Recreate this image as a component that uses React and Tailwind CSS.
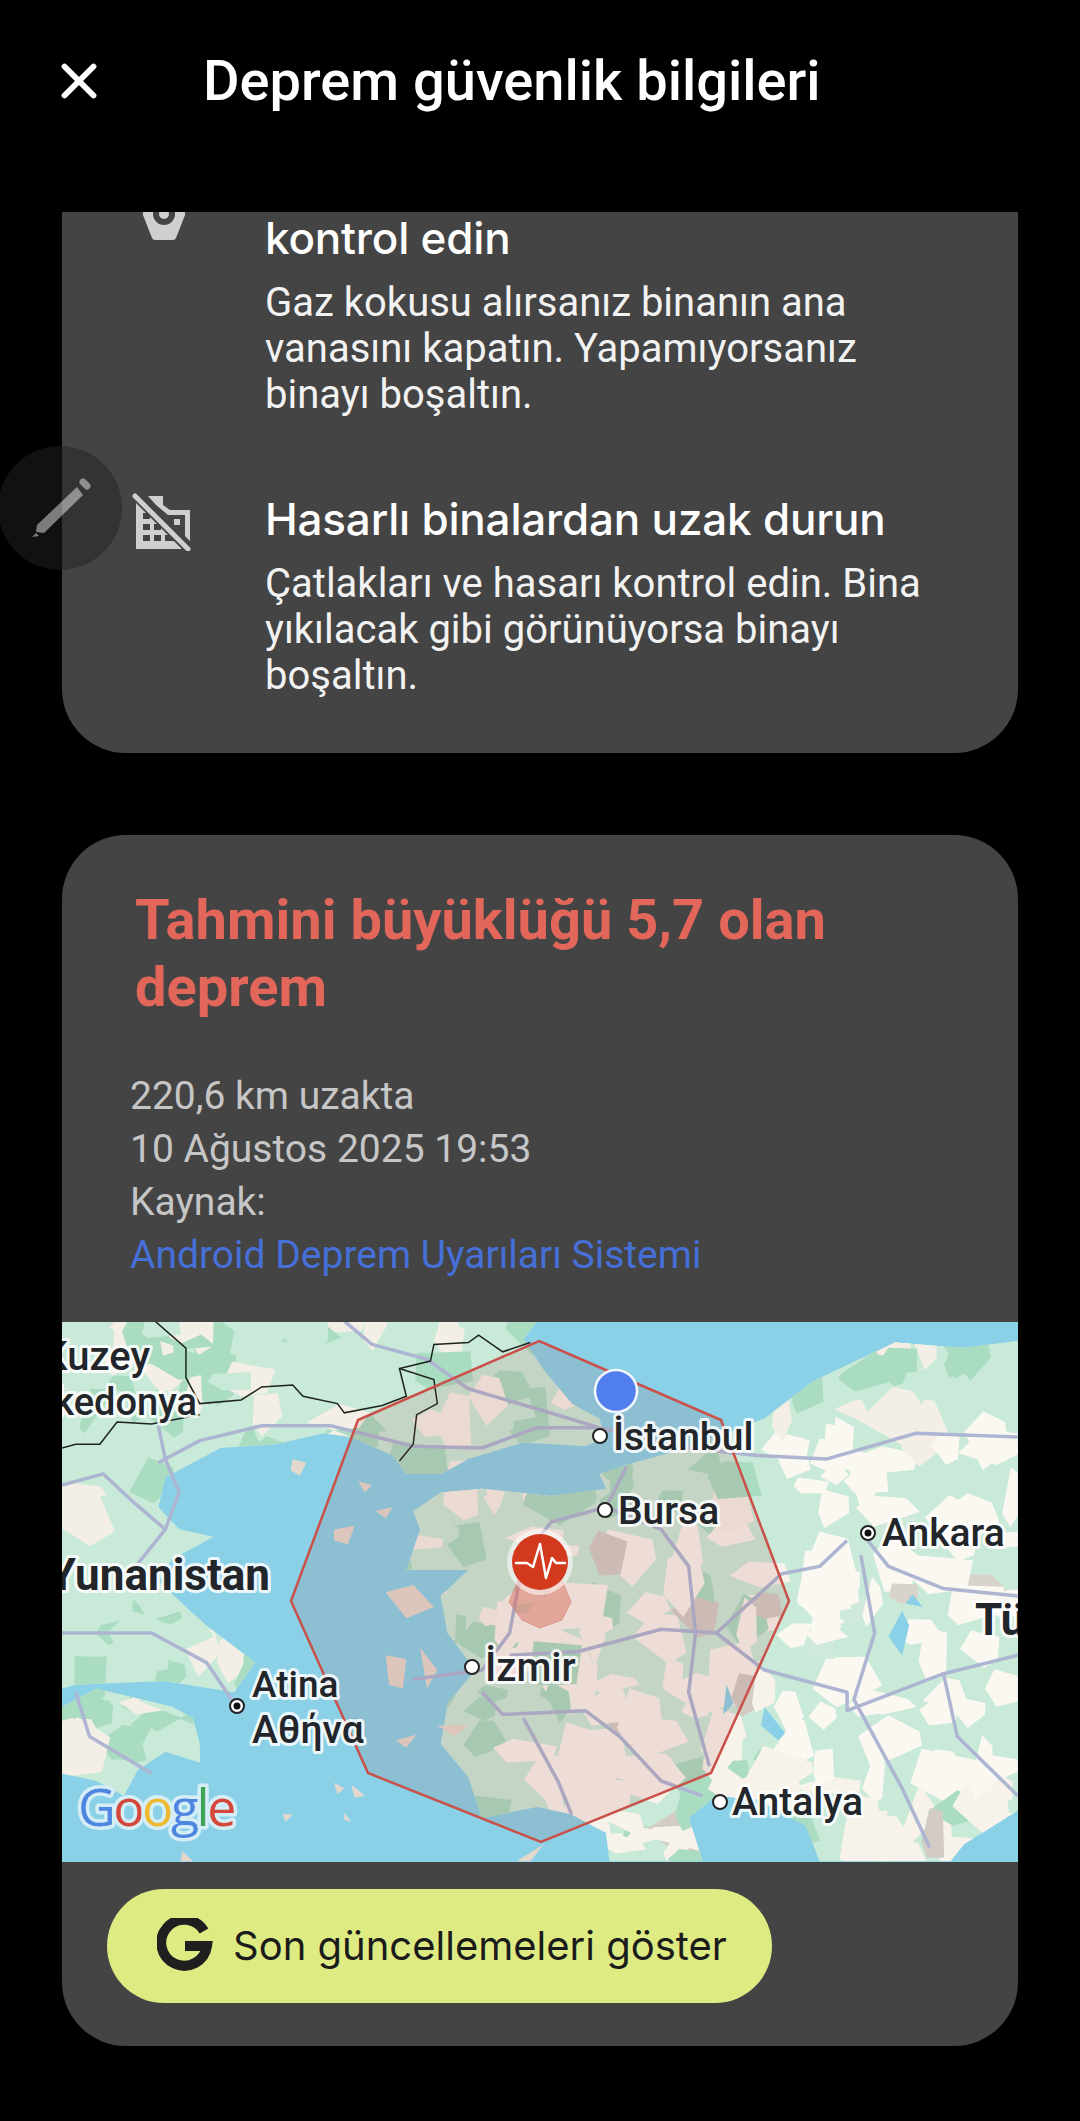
import { X } from "lucide-react";

// map paths use the coordinates of the zoomed crop, the group transform brings them to the map box
const LAND = {
  anatolia:
    "M1478 110 L1400 130 L1300 115 L1180 220 L1110 320 L1070 350 L1000 400 L920 440 L870 470 L880 510 L800 530 L700 510 L640 520 L600 570 L610 620 L590 730 L680 730 L640 800 L650 900 L690 1000 L650 1090 L640 1200 L680 1290 L700 1400 L780 1370 L830 1390 L880 1440 L885 1517 L1020 1517 L1000 1400 L1040 1340 L1100 1350 L1170 1420 L1190 1517 L1380 1517 L1400 1470 L1478 1380Z",
  balkans:
    "M90 57 L780 57 L760 105 L790 190 L830 280 L870 320 L880 370 L850 395 L760 385 L680 430 L640 470 L590 470 L570 420 L510 370 L470 360 L400 390 L320 400 L240 480 L230 560 L260 620 L310 640 L250 700 L230 760 L270 830 L300 880 L370 980 L340 1060 L240 1030 L110 1040 L90 1050Z",
  peloponnese:
    "M90 1100 L140 1050 L250 1100 L280 1130 L290 1200 L290 1250 L240 1220 L200 1270 L180 1340 L140 1300 L90 1280Z",
};

// small seeded generator, so the low-poly land texture is the same on every load
const makeRandom = (seed) => () => {
  seed = (seed * 1664525 + 1013904223) % 4294967296;
  return seed / 4294967296;
};

const buildLandPatches = () => {
  const random = makeRandom(77);
  const patches = [];
  for (let i = 0; i < 420; i++) {
    const x = 90 + random() * 1388;
    const y = 57 + random() * 1460;
    const rx = 15 + random() * 40;
    const ry = 25 + random() * 70;
    const points = [0, 1, 2, 3, 4]
      .map((n) => {
        const a = (n / 5) * Math.PI * 2 + random();
        return `${(x + Math.cos(a) * rx).toFixed(0)},${(y + Math.sin(a) * ry).toFixed(0)}`;
      })
      .join(" ");
    const interior = x > 720 && y > 620;
    const east = x > 1130 && y > 380 && y < 1300;
    const roll = random();
    let fill;
    if (east) fill = roll < 0.06 ? "#cfe9da" : roll < 0.1 ? "#d8d4cc" : "#fbf8f2";
    else if (interior) fill = roll < 0.16 ? "#a9dcc1" : roll < 0.24 ? "#d2ccc4" : "#f7f3eb";
    else fill = roll < 0.4 ? "#a9dcc1" : roll < 0.62 ? "#f4efe6" : "#c9ead9";
    patches.push({ points, fill });
  }
  return patches;
};

const landPatches = buildLandPatches();

const islands = [
  "M485 620 L515 610 L505 660 L485 650Z",
  "M545 570 L570 560 L560 590Z",
  "M520 490 L540 500 L530 520Z",
  "M425 430 L445 440 L435 475 L422 460Z",
  "M560 790 L600 770 L630 830 L590 860Z",
  "M560 960 L590 970 L585 1050 L565 1040Z",
  "M610 940 L635 1000 L620 1050Z",
  "M635 1150 L680 1150 L660 1180Z",
  "M575 1190 L605 1175 L590 1210Z",
  "M510 1310 L530 1340 L515 1345Z",
  "M485 1305 L500 1320 L490 1335Z",
  "M410 1390 L425 1390 L415 1410Z",
  "M500 1385 L510 1410 L500 1405Z",
  "M265 1490 L280 1517 L262 1517Z",
  "M790 1470 L770 1517 L750 1517Z",
];

const roads = [
  "M500 57 L540 120 L620 160 L680 240 L790 300 L870 345",
  "M870 345 L780 345 L700 400 L600 395 L480 340 L380 340 L290 380 L230 440",
  "M230 340 L240 430 L260 520 L240 620 L180 760",
  "M90 500 L150 470 L190 540 L240 620",
  "M90 900 L220 900 L300 980 L340 1090",
  "M110 1060 L130 1180 L220 1280",
  "M870 345 L1000 400 L1100 420 L1200 430 L1330 360 L1478 370",
  "M910 450 L880 560 L800 600 L760 700 L740 900 L700 1000 L600 1025",
  "M880 560 L960 620 L1000 720 L1010 900 L1000 1060 L1030 1260",
  "M1230 650 L1190 720 L1135 740 L1040 900 L960 890 L840 950 L740 960",
  "M1040 900 L1110 1000 L1230 1060 L1230 1110 L1370 1010 L1478 960",
  "M1260 650 L1290 720 L1370 780 L1478 800",
  "M1250 690 L1270 900 L1240 1080 L1310 1320 L1350 1480",
  "M700 1060 L730 1120 L850 1110 L900 1180 L960 1300 L1020 1340",
  "M760 1130 L810 1300 L830 1390",
  "M1370 1010 L1390 1180 L1478 1340",
];

const borders = [
  "M225 57 L270 130 L270 210 L290 280 L350 270 L380 235 L425 230 L440 260 L490 280 L500 305 L555 285 L590 260 L580 185 L625 165 L630 120 L680 115 L695 95 L730 140 L770 115",
  "M580 185 L630 215 L635 280 L605 310 L600 390 L580 435",
  "M290 310 L220 335 L170 330 L145 390 L110 390 L90 400",
];

const mapLabels = [
  { text: "Kuzey", x: 88, y: 48, size: 40, anchor: "end", weight: 500 },
  { text: "Makedonya", x: 135, y: 93, size: 38, anchor: "end", weight: 500 },
  { text: "Yunanistan", x: 208, y: 268, size: 44, anchor: "end", weight: 700 },
  { text: "İstanbul", x: 551, y: 128, size: 39, weight: 500 },
  { text: "Bursa", x: 556, y: 202, size: 39, weight: 500 },
  { text: "Ankara", x: 820, y: 224, size: 39, weight: 500 },
  { text: "Tü", x: 913, y: 313, size: 44, weight: 700 },
  { text: "İzmir", x: 423, y: 359, size: 40, weight: 500 },
  { text: "Atina", x: 190, y: 375, size: 37, weight: 500 },
  { text: "Αθήνα", x: 190, y: 421, size: 39, weight: 500 },
  { text: "Antalya", x: 670, y: 493, size: 39, weight: 500 },
];

const mapDots = [
  { x: 538, y: 114 },
  { x: 543, y: 188 },
  { x: 806, y: 211, capital: true },
  { x: 410, y: 345 },
  { x: 175, y: 384, capital: true },
  { x: 658, y: 480 },
];

const EarthquakeMap = () => (
  <svg viewBox="0 0 956 540" className="block h-[540px] w-full bg-[#8ad1e8]">
    <defs>
      <clipPath id="land">
        <path d={LAND.anatolia} />
        <path d={LAND.balkans} />
        <path d={LAND.peloponnese} />
      </clipPath>
    </defs>
    <g transform="translate(-62,-22) scale(0.6887,0.37)">
      <path fill="#c9ead9" d={LAND.anatolia} />
      <path fill="#c9ead9" d={LAND.balkans} />
      <path fill="#c9ead9" d={LAND.peloponnese} />
      <g clipPath="url(#land)">
        {landPatches.map((patch) => (
          <polygon key={patch.points} points={patch.points} fill={patch.fill} />
        ))}
      </g>
      {islands.map((d) => (
        <path key={d} d={d} fill="#e4d8cc" />
      ))}
      {/* lakes */}
      <path fill="#8ad1e8" d="M1310 840 L1320 880 L1310 960 L1290 910Z" />
      <path fill="#8ad1e8" d="M1110 1100 L1140 1170 L1130 1190 L1105 1150Z" />
      <path fill="#8ad1e8" d="M1055 1040 L1065 1090 L1050 1120Z" />
      <path fill="#8ad1e8" d="M1325 795 L1340 830 L1315 820Z" />
      {roads.map((d) => (
        <path key={d} d={d} fill="none" stroke="#adb5d2" strokeWidth="3.5" strokeLinejoin="round" vectorEffect="non-scaling-stroke" />
      ))}
      {borders.map((d) => (
        <path key={d} d={d} fill="none" stroke="#1d2420" strokeWidth="1.5" vectorEffect="non-scaling-stroke" />
      ))}
    </g>

    {/* estimated shaking area */}
    <polygon
      points="477,19 659,98 727,279 649,451 479,520 306,451 229,279 296,98"
      fill="#a84040"
      fillOpacity="0.12"
      stroke="#c9514a"
      strokeWidth="2.5"
    />
    <polygon
      points="478,252 500,258 509,280 500,298 478,306 460,298 447,280 456,258"
      fill="#d9705f"
      fillOpacity="0.5"
      stroke="#d9705f"
      strokeOpacity="0.5"
    />

    {mapDots.map((dot) => (
      <g key={dot.x}>
        <circle cx={dot.x} cy={dot.y} r="7" fill="#fff" stroke="#222" strokeWidth="2" />
        {dot.capital && <circle cx={dot.x} cy={dot.y} r="3.5" fill="#111" />}
      </g>
    ))}
    {mapLabels.map((label) => (
      <text
        key={label.text}
        x={label.x}
        y={label.y}
        textAnchor={label.anchor || "start"}
        fontSize={label.size}
        fontWeight={label.weight}
        fill="#22262a"
        stroke="#fff"
        strokeOpacity="0.85"
        strokeWidth="6"
        paintOrder="stroke"
        strokeLinejoin="round"
        className="font-['Roboto',sans-serif]"
      >
        {label.text}
      </text>
    ))}

    {/* google mark */}
    <text
      x="16"
      y="504"
      fontSize="52"
      fontWeight="500"
      stroke="#d5eef6"
      strokeWidth="7"
      paintOrder="stroke"
      strokeLinejoin="round"
      letterSpacing="-2.5"
      className="font-['Open_Sans',sans-serif]"
    >
      <tspan fill="#4f86e0">G</tspan>
      <tspan fill="#d4483b">o</tspan>
      <tspan fill="#eeb82f">o</tspan>
      <tspan fill="#4f86e0">g</tspan>
      <tspan fill="#3fa35a">l</tspan>
      <tspan fill="#d4483b">e</tspan>
    </text>

    {/* user location */}
    <circle cx="554" cy="69" r="21" fill="#5180ee" stroke="#f4f7fb" strokeWidth="2.5" />

    {/* epicentre */}
    <circle cx="478" cy="240" r="33" fill="#fff" fillOpacity="0.55" />
    <circle cx="478" cy="240" r="28" fill="#d33a1d" />
    <path
      d="M454 241 H465 L471 245 L478 222 L484 256 L490 236 L494 241 H503"
      fill="none"
      stroke="#fff"
      strokeWidth="2.5"
      strokeLinejoin="round"
      strokeLinecap="round"
    />
  </svg>
);

const GasValveIcon = () => (
  <svg viewBox="0 0 42 28" className="h-7 w-[42px]">
    <path fill="#cfcfcf" d="M0 0 H42 V3 L33 26 Q32 28 30 28 H12 Q10 28 9 26 L0 3Z" />
    <circle cx="21" cy="2" r="11" fill="#444" />
    <circle cx="21" cy="2" r="5" fill="#cfcfcf" />
  </svg>
);

const DamagedBuildingIcon = () => (
  <svg viewBox="0 0 60 58" className="h-[58px] w-[60px] -translate-x-[2px]">
    <path
      fill="#cfcfcf"
      d="M4 10 L31 37 L50 56 H4Z M16 3 H31 V12 L38 17 H58 V48 L53 43 V22 H36 L24 12Z"
    />
    <g fill="#444">
      <rect x="11" y="20" width="7" height="6" />
      <rect x="11" y="31" width="7" height="6" />
      <rect x="11" y="42" width="7" height="6" />
      <rect x="22" y="31" width="7" height="6" />
      <rect x="22" y="42" width="7" height="6" />
      <path d="M33 42 H39 L44 48 H33Z" />
    </g>
    <rect x="42" y="26" width="6" height="6" fill="#cfcfcf" />
    <path d="M2 2 L56 57" stroke="#444" strokeWidth="7" />
    <path d="M3 3 L56 56" stroke="#cfcfcf" strokeWidth="5" strokeLinecap="round" />
  </svg>
);

const PencilBubble = () => (
  <div className="absolute left-[-2px] top-[446px] flex h-[124px] w-[124px] items-center justify-center rounded-full bg-[#222222]/50">
    <svg viewBox="0 0 64 64" className="h-16 w-16">
      <g fill="#fff" fillOpacity="0.45">
        <path d="M9 49 L49 11 L55 19 L16 57 L8 56Z" />
        <path d="M4 61 L8 57 L11 60Z" />
      </g>
      <path d="M55 6 L59 10" stroke="#fff" strokeOpacity="0.45" strokeWidth="7" strokeLinecap="round" />
    </svg>
  </div>
);

const SafetyTip = ({ icon, title, lines }) => (
  <div className="flex">
    <div className="flex w-[203px] shrink-0 justify-center">{icon}</div>
    <div className="min-w-0">
      <h3 className="whitespace-nowrap text-[44px] leading-[52px] font-medium text-white font-['Inter',sans-serif] tracking-[-0.2px]">
        {title}
      </h3>
      <p className="mt-[16px] text-[40px] leading-[46px] text-[#f2f2f2] font-['Roboto',sans-serif]">
        {lines.map((line) => (
          <span key={line} className="block whitespace-nowrap">
            {line}
          </span>
        ))}
      </p>
    </div>
  </div>
);

const GoogleG = () => (
  <svg viewBox="0 0 56 56" className="h-14 w-14 shrink-0">
    <path d="M47 13 A23 23 0 1 0 50 28 H28" fill="none" stroke="#1f1f1f" strokeWidth="10" />
  </svg>
);

export default function App() {
  return (
    <div className="relative h-[2121px] w-[1080px] overflow-hidden bg-black font-['Roboto',sans-serif]">
      <header className="flex h-[212px] items-start pt-[52px] pl-[50px]">
        <X size={58} color="#fff" strokeWidth={2.4} />
        <h1 className="ml-[95px] whitespace-nowrap text-[56px] leading-[58px] font-medium text-white">
          Deprem güvenlik bilgileri
        </h1>
      </header>

      <section className="mx-[62px] h-[541px] overflow-hidden rounded-b-[64px] bg-[#444444]">
        <div className="flex flex-col gap-[75px]">
          <SafetyTip
            icon={<GasValveIcon />}
            title="kontrol edin"
            lines={["Gaz kokusu alırsanız binanın ana", "vanasını kapatın. Yapamıyorsanız", "binayı boşaltın."]}
          />
          <SafetyTip
            icon={<DamagedBuildingIcon />}
            title="Hasarlı binalardan uzak durun"
            lines={["Çatlakları ve hasarı kontrol edin. Bina", "yıkılacak gibi görünüyorsa binayı", "boşaltın."]}
          />
        </div>
      </section>

      <section className="mx-[62px] mt-[82px] h-[1211px] overflow-hidden rounded-[64px] bg-[#444444]">
        <h2 className="px-[73px] pt-[52px] text-[56px] leading-[67px] font-bold text-[#e2675a]">
          Tahmini büyüklüğü 5,7 olan
          <br />
          deprem
        </h2>
        <div className="mt-[49px] px-[68px] text-[39px] leading-[53px] text-[#c6c6c6]">
          <p>220,6 km uzakta</p>
          <p>10 Ağustos 2025 19:53</p>
          <p>Kaynak:</p>
          <p className="text-[#4670d8]">Android Deprem Uyarıları Sistemi</p>
        </div>
        <div className="mt-[40px]">
          <EarthquakeMap />
        </div>
        <div className="pl-[45px] pt-[27px]">
          <button className="flex h-[114px] w-[665px] items-center rounded-full bg-[#deeb83] pl-[50px]">
            <GoogleG />
            <span className="ml-[20px] whitespace-nowrap text-[40px] text-[#1b1b1b] font-['Inter',sans-serif]">
              Son güncellemeleri göster
            </span>
          </button>
        </div>
      </section>

      <PencilBubble />
    </div>
  );
}
